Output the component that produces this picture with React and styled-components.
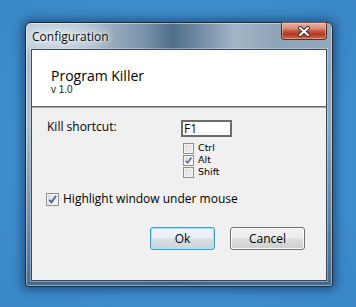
import React from "react";
import styled, { createGlobalStyle } from "styled-components";

const Global = createGlobalStyle`
  html, body { margin: 0; padding: 0; }
  body {
    background: #3f8fce;
    width: 356px;
    height: 307px;
    overflow: hidden;
    font-family: "Open Sans", "Noto Sans", sans-serif;
  }
`;

const Desktop = styled.div`
  width: 356px;
  height: 307px;
  box-sizing: border-box;
  padding: 22px 0 0 25px;
  background: radial-gradient(ellipse at 50% 50%, #4194d4 0%, #3d8ccc 70%, #3a86c6 100%);
`;

const Window = styled.div`
  width: 308px;
  height: 265px;
  box-sizing: border-box;
  display: flex;
  flex-direction: column;
  border: 1px solid #1d2c3b;
  border-radius: 6px 6px 3px 3px;
  box-shadow: 0 0 10px 3px rgba(10, 30, 60, 0.5),
    inset 0 0 0 1px rgba(255, 255, 255, 0.45);
  background:
    linear-gradient(180deg, rgba(60, 98, 135, 0) 0%, rgba(60, 98, 135, 0) 38%, rgba(62, 100, 138, 0.92) 100%),
    radial-gradient(ellipse 60px 22px at 30px 14px, rgba(230, 238, 245, 0.85), rgba(230, 238, 245, 0) 100%),
    linear-gradient(90deg, #aebfcd 0%, #a7b9c8 22%, #7b95ab 38%, #4f6f8a 48%, #7690a7 58%, #a1b5c5 68%, #8ea4b7 82%, #93a8ba 100%);
`;

const TitleBar = styled.div`
  height: 26px;
  display: flex;
  align-items: flex-start;
  justify-content: space-between;
  padding: 0 5px 0 6px;
`;

const Title = styled.span`
  margin-top: 6px;
  font-size: 12px;
  line-height: 16px;
  color: #0b0b0b;
  text-shadow: 0 0 6px rgba(255, 255, 255, 0.9), 0 0 3px rgba(255, 255, 255, 0.8);
`;

const CloseButton = styled.div`
  margin-top: -1px;
  width: 44px;
  height: 16px;
  display: flex;
  align-items: center;
  justify-content: center;
  border: 1px solid #5e2a22;
  border-top-color: #8a5048;
  border-radius: 0 0 4px 4px;
  background: linear-gradient(180deg, #e7b2a5 0%, #d98c78 35%, #c6553d 50%, #b23a22 70%, #cc6a4f 100%);
  box-shadow: inset 0 0 0 1px rgba(255, 210, 200, 0.45);
`;

const Client = styled.div`
  flex: 1;
  margin: 0 5px 5px 5px;
  display: flex;
  flex-direction: column;
  border: 1px solid #3b4c5d;
  box-shadow: 0 0 0 1px rgba(230, 240, 248, 0.35);
  background: #f0f0f0;
`;

const Header = styled.div`
  height: 57px;
  box-sizing: border-box;
  padding: 16px 0 0 19px;
  background: #ffffff;
  border-bottom: 1px solid #6b6b6b;
  box-shadow: 0 1px 0 #a5a5a5;
  margin-bottom: 1px;
`;

const AppName = styled.div`
  font-size: 14px;
  line-height: 19px;
  color: #000;
`;

const Version = styled.div`
  font-family: "Liberation Sans", Arial, sans-serif;
  font-size: 10px;
  line-height: 10px;
  margin-top: 0;
  color: #2e1810;
`;

const Body = styled.div`
  flex: 1;
  display: flex;
  flex-direction: column;
  padding: 10px 21px 0 15px;
`;

const ShortcutRow = styled.div`
  display: flex;
  align-items: flex-start;
`;

const Label = styled.span`
  width: 134px;
  font-size: 12px;
  line-height: 16px;
  margin-top: 1px;
  color: #000;
`;

const InputColumn = styled.div`
  display: flex;
  flex-direction: column;
`;

const KeyBox = styled.div`
  width: 51px;
  height: 17px;
  box-sizing: border-box;
  border: 2px solid #6c6c6c;
  background: #fff;
  margin-top: 2px;
  padding: 0 0 0 1px;
  font-size: 12px;
  line-height: 13px;
  color: #000;
`;

const ModList = styled.div`
  display: flex;
  flex-direction: column;
  margin: 5px 0 0 2px;
`;

const ModRow = styled.div`
  display: flex;
  align-items: center;
  height: 12px;
  gap: 4px;
`;

const ModLabel = styled.span`
  font-family: "DejaVu Sans", sans-serif;
  font-size: 9.5px;
  line-height: 12px;
  color: #000;
`;

const Box = styled.span`
  width: ${(p) => p.$size}px;
  height: ${(p) => p.$size}px;
  box-sizing: border-box;
  border: 1px solid #8e8f8f;
  background: linear-gradient(135deg, #d8d8d8 0%, #e9e9e9 50%, #f7f7f7 100%);
  box-shadow: inset 0 0 0 1px #f4f4f4;
  display: flex;
  align-items: center;
  justify-content: center;
  flex: none;
`;

const HighlightRow = styled.div`
  display: flex;
  align-items: center;
  gap: 4px;
  height: 16px;
  margin-top: 13px;
  margin-left: -1px;
`;

const HighlightLabel = styled.span`
  font-size: 12px;
  line-height: 16px;
  color: #000;
`;

const ButtonRow = styled.div`
  display: flex;
  justify-content: flex-end;
  gap: 15px;
  margin-top: 20px;
`;

const Button = styled.div`
  width: ${(p) => p.$w}px;
  height: 23px;
  box-sizing: border-box;
  display: flex;
  align-items: center;
  justify-content: center;
  border-radius: 3px;
  font-size: 12px;
  color: #000;
  border: 1px solid ${(p) => (p.$default ? "#3c9bd6" : "#707070")};
  box-shadow: inset 0 0 0 1px ${(p) => (p.$default ? "#a8e0f8" : "#fbfbfb")};
  background: ${(p) =>
    p.$default
      ? "linear-gradient(180deg, #f0f7fb 0%, #e6eef3 48%, #d7dfe5 52%, #cdd5db 100%)"
      : "linear-gradient(180deg, #f2f2f2 0%, #ebebeb 48%, #dddddd 52%, #cfcfcf 100%)"};
`;

const Check = ({ size }) => (
  <svg width={size} height={size} viewBox="0 0 10 10">
    <path d="M2 5.2 L4 7.6 L8.2 1.8" fill="none" stroke="#4a5f8e" strokeWidth="1.6" strokeLinejoin="round" />
  </svg>
);

const CheckBox = ({ size, checked }) => (
  <Box $size={size}>{checked && <Check size={size - 2} />}</Box>
);

const CloseGlyph = () => (
  <svg width="14" height="11" viewBox="0 0 14 11">
    <path d="M3 2 L11 9 M11 2 L3 9" stroke="#3b2420" strokeWidth="4" strokeLinecap="round" />
    <path d="M3 2 L11 9 M11 2 L3 9" stroke="#ffffff" strokeWidth="2.2" strokeLinecap="round" />
  </svg>
);

export default function App() {
  return (
    <>
      <Global />
      <Desktop>
        <Window>
          <TitleBar>
            <Title>Configuration</Title>
            <CloseButton>
              <CloseGlyph />
            </CloseButton>
          </TitleBar>
          <Client>
            <Header>
              <AppName>Program Killer</AppName>
              <Version>v 1.0</Version>
            </Header>
            <Body>
              <ShortcutRow>
                <Label>Kill shortcut:</Label>
                <InputColumn>
                  <KeyBox>F1</KeyBox>
                  <ModList>
                    <ModRow>
                      <CheckBox size={11} />
                      <ModLabel>Ctrl</ModLabel>
                    </ModRow>
                    <ModRow>
                      <CheckBox size={11} checked />
                      <ModLabel>Alt</ModLabel>
                    </ModRow>
                    <ModRow>
                      <CheckBox size={11} />
                      <ModLabel>Shift</ModLabel>
                    </ModRow>
                  </ModList>
                </InputColumn>
              </ShortcutRow>
              <HighlightRow>
                <CheckBox size={13} checked />
                <HighlightLabel>Highlight window under mouse</HighlightLabel>
              </HighlightRow>
              <ButtonRow>
                <Button $w={65} $default>Ok</Button>
                <Button $w={75}>Cancel</Button>
              </ButtonRow>
            </Body>
          </Client>
        </Window>
      </Desktop>
    </>
  );
}
